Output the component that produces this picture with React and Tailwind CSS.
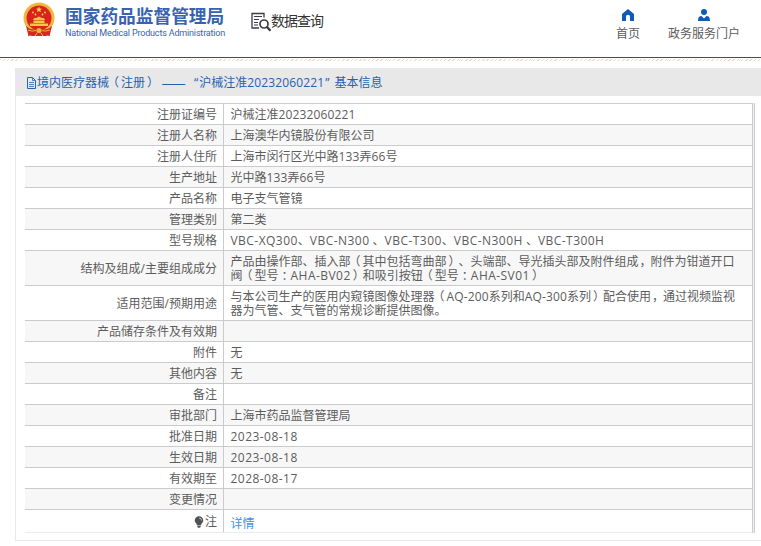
import React from 'react';
import clsx from 'clsx';

const ROWS = [
  { label: '注册证编号', value: '沪械注准20232060221' },
  { label: '注册人名称', value: '上海澳华内镜股份有限公司' },
  { label: '注册人住所', value: '上海市闵行区光中路133弄66号' },
  { label: '生产地址', value: '光中路133弄66号' },
  { label: '产品名称', value: '电子支气管镜' },
  { label: '管理类别', value: '第二类' },
  { label: '型号规格', value: 'VBC-XQ300、VBC-N300 、VBC-T300、VBC-N300H 、VBC-T300H' },
  {
    label: '结构及组成/主要组成成分',
    value: '产品由操作部、插入部（其中包括弯曲部）、头端部、导光插头部及附件组成，附件为钳道开口\n阀（型号：AHA-BV02）和吸引按钮（型号：AHA-SV01）',
    tall: true,
  },
  {
    label: '适用范围/预期用途',
    value: '与本公司生产的医用内窥镜图像处理器（AQ-200系列和AQ-300系列）配合使用，通过视频监视\n器为气管、支气管的常规诊断提供图像。',
    tall: true,
  },
  { label: '产品储存条件及有效期', value: '' },
  { label: '附件', value: '无' },
  { label: '其他内容', value: '无' },
  { label: '备注', value: '' },
  { label: '审批部门', value: '上海市药品监督管理局' },
  { label: '批准日期', value: '2023-08-18' },
  { label: '生效日期', value: '2023-08-18' },
  { label: '有效期至', value: '2028-08-17' },
  { label: '变更情况', value: '' },
];

// Fullwidth punctuation sits closer to the middle of its cell
const PUNCTUATION = {
  '（': '-ml-[2px] mr-[2px]',
  '）': 'ml-[2px] -mr-[2px]',
  '：': 'ml-[3px] -mr-[3px]',
  '，': 'ml-px -mr-px',
};

// Latin runs are set slightly wider than the Chinese text around them
function MixedText({ text }) {
  return text.split(/([A-Za-z0-9-]+|[（）：，])/).map((part, index) => {
    if (PUNCTUATION[part]) {
      return <span key={index} className={PUNCTUATION[part]}>{part}</span>;
    }
    if (/^[A-Za-z0-9-]/.test(part)) {
      const wide = part.includes('-') && !part.startsWith('AQ');
      return (
        <span key={index} className={wide ? 'tracking-[0.46px]' : 'tracking-[0.14px]'}>
          {part}
        </span>
      );
    }
    return part;
  });
}

function Emblem() {
  return (
    <svg viewBox="0 0 32 36" className="h-9 w-8 shrink-0">
      <path d="M6 25L5 34l5-1h12l5 1-1-9z" fill="#d5281e" />
      <circle cx="16" cy="16" r="15.500" fill="#f0b840" />
      <circle cx="16" cy="16" r="12.500" fill="#d9231c" />
      <path d="M16 4.500l.8 2.100 2.200.1-1.700 1.400.6 2.200-1.900-1.300-1.900 1.300.6-2.200L13 6.700l2.200-.1z" fill="#ffd34e" />
      <g fill="#ffd34e">
        <circle cx="10" cy="10.500" r=".9" />
        <circle cx="12.500" cy="12.500" r=".9" />
        <circle cx="19.500" cy="12.500" r=".9" />
        <circle cx="22" cy="10.500" r=".9" />
      </g>
      <path d="M10 18h12l-1.200-2h-2L16 14.500 13.200 16h-2zM10.500 18.500h11v2.500h-11zM7 21.500h18v2.500H7z" fill="#f8c64a" />
      <path d="M3 24q4 4 10 3.500a3.500 3.500 0 0 1 6 0q6 .5 10-3.500l-2 8-4 2H9l-4-2z" fill="#d5281e" />
      <circle cx="16" cy="28.500" r="2.600" fill="#eab13f" />
      <path d="M5 28q5 2 8 .5M27 28q-5 2-8 .5M12 34l2-3M20 34l-2-3" fill="none" stroke="#edb545" strokeWidth="1" />
    </svg>
  );
}

function SearchDocIcon() {
  return (
    <svg viewBox="0 0 21 20" className="h-5 w-[21px] shrink-0" fill="none" stroke="#3b3b45">
      <path d="M13 5.500V1.500H1v14.500h7" strokeWidth="1.300" />
      <path d="M3 4.500h8M3 7.500h5M3 10.500h4M3 13h4" strokeWidth="1.100" />
      <circle cx="13" cy="12" r="4" strokeWidth="1.700" />
      <path d="M16 15l3.500 3.800" strokeWidth="2.400" />
    </svg>
  );
}

function HomeIcon() {
  return (
    <svg viewBox="0 0 12 12" className="h-3 w-3" fill="#0f5bb8">
      <path d="M6 0l6 5v7H8V7.800a2 2 0 0 0-4 0V12H0V5z" />
    </svg>
  );
}

function UserIcon() {
  return (
    <svg viewBox="0 0 12 12" className="h-3 w-3" fill="#0f5bb8">
      <circle cx="6" cy="3" r="3" />
      <path d="M0 12c0-3.500 1-5 3.500-5L6 9.500 8.500 7C11 7 12 8.500 12 12z" />
    </svg>
  );
}

function DocIcon() {
  return (
    <svg viewBox="0 0 11 12" className="h-3 w-[11px] shrink-0" fill="none" stroke="#2862b5" strokeWidth="1">
      <path d="M1.500 .5h5L9.500 3.500v8h-8z" />
      <path d="M6.500.5v3h3M3 5.500h5M3 7.500h5M3 9.500h5" strokeWidth=".8" />
    </svg>
  );
}

function BulbIcon() {
  return (
    <svg viewBox="0 0 10 12" className="mr-px h-3 w-[10px]">
      <path d="M5 .3a4.300 4.300 0 0 1 4.300 4.300C9.300 6.500 7.500 7.300 7 9H3C2.500 7.300.7 6.500.7 4.600A4.300 4.300 0 0 1 5 .3z" fill="#4f5155" />
      <path d="M3.300 9.500h3.400v1.200L5.800 11.700H4.200l-.9-1z" fill="#4f5155" />
      <path d="M5 2a2.600 2.600 0 0 1 2.600 2.600" fill="none" stroke="#d8d8d8" strokeWidth=".8" />
    </svg>
  );
}

function Row({ label, tall, shaded, last, children }) {
  return (
    <div
      className={clsx(
        'flex border-b',
        shaded ? 'bg-[#f7f7f7]' : 'bg-white',
        last ? 'h-[23px] border-[#ececec]' : 'border-[#cbcbcd]',
        !last && (tall ? 'h-[35px]' : 'h-[21px]')
      )}
    >
      <div className="flex w-[199px] shrink-0 items-center justify-end border-r border-[#cbcbcd] pr-[6px] pt-[2px]">
        {label}
      </div>
      <div className={clsx('flex items-center whitespace-pre pl-[6.5px] leading-[14px]', last ? 'pt-[5px]' : 'pt-[2px]')}>
        <div>{children}</div>
      </div>
    </div>
  );
}

export default function App() {
  return (
    <div className="h-[546px] w-[761px] overflow-hidden bg-white font-['Open_Sans','Noto_Sans_CJK_SC',sans-serif] text-[12px] leading-[14px] text-[#5c5c5c] [text-spacing-trim:space-all]">
      <header className="flex h-[58px] items-start border-b border-[#1c588c] pl-[23px]">
        <div className="mt-[2px]">
          <Emblem />
        </div>
        <div className="ml-[11px] mt-[6px] w-[161px] whitespace-nowrap text-[#3763b0]">
          <div className="-ml-px text-[17.7px] font-bold leading-[21px]">国家药品监督管理局</div>
          <div className="-ml-px font-['Roboto',sans-serif] text-[9px] leading-[13px] tracking-[-0.17px]">
            National Medical Products Administration
          </div>
        </div>
        <div className="ml-[24px] mt-[12px] flex">
          <SearchDocIcon />
          <span className="-ml-px mt-px text-[14px] leading-[16px] tracking-[-1px] text-[#333]">数据查询</span>
        </div>
        <nav className="ml-auto mr-[21px] mt-[9px] flex gap-[28px]">
          <div className="flex flex-col items-center gap-[6px]">
            <HomeIcon />
            <span>首页</span>
          </div>
          <div className="flex flex-col items-center gap-[6px]">
            <UserIcon />
            <span>政务服务门户</span>
          </div>
        </nav>
      </header>
      <div className="h-[10px] pt-px">
        <div className="h-[2px] bg-[repeating-linear-gradient(135deg,#d9dfdc_0_1px,#fff_1px_3px)]" />
      </div>

      <main className="ml-[15px] h-[473px] border-b border-l border-[#e8e8e8]">
        <h1 className="flex h-7 items-center whitespace-pre bg-[#e8e8e8] pl-[10px] pt-px text-[#2461b3]">
          <DocIcon />
          <span><MixedText text="境内医疗器械（注册）" /></span>
          <span className="ml-[2px] flex w-[29px] justify-center font-['Noto_Sans_CJK_SC',sans-serif] text-[14.500px]">——</span>
          <span className="ml-[6px]">“</span>
          <span className="ml-px"><MixedText text="沪械注准20232060221" /></span>
          <span className="ml-px">”</span>
          <span className="ml-[5px]">基本信息</span>
        </h1>

        {/* Record table */}
        <div className="ml-[9px] mt-[7px] w-[730px] border-r border-[#cbcbd0] bg-[#f0f0f6] pr-px">
          <div className="border-r border-t border-[#cbcbd0]">
            {ROWS.map((row, index) => (
              <Row key={row.label} label={row.label} tall={row.tall} shaded={index % 2 === 1}>
                <MixedText text={row.value} />
              </Row>
            ))}
            <Row
              last
              label={
                <>
                  <BulbIcon />
                  注
                </>
              }
            >
              <a href="#" className="text-[#3f8fe0]">详情</a>
            </Row>
          </div>
        </div>
      </main>
    </div>
  );
}
